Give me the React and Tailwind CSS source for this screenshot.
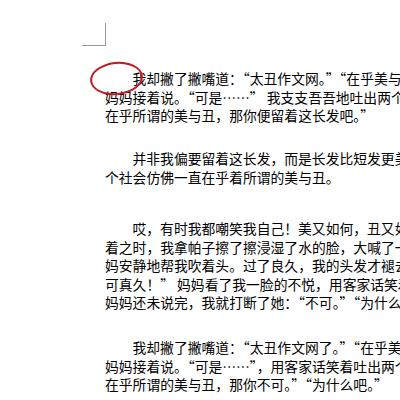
import React from 'react';

// Scanned document page: paragraphs run off the right edge of the crop
const paragraphs = [
  {
    gap: 'mt-0',
    lines: [
      '我却撇了撇嘴道：“太丑作文网。”“在乎美与丑有什么用',
      '妈妈接着说。“可是……” 我支支吾吾地吐出两个字',
      '在乎所谓的美与丑，那你便留着这长发吧。”',
    ],
  },
  {
    gap: 'mt-[24.5px]',
    lines: ['并非我偏要留着这长发，而是长发比短发更美', '个社会仿佛一直在乎着所谓的美与丑。'],
  },
  {
    gap: 'mt-[33px]',
    lines: [
      '哎，有时我都嘲笑我自己！美又如何，丑又如何',
      '着之时，我拿帕子擦了擦浸湿了水的脸，大喊了一声',
      '妈安静地帮我吹着头。过了良久，我的头发才褪去',
      '可真久！” 妈妈看了我一脸的不悦，用客家话笑着说',
      '妈妈还未说完，我就打断了她：“不可。”“为什么',
    ],
  },
  {
    gap: 'mt-[26.5px]',
    lines: [
      '我却撇了撇嘴道：“太丑作文网了。”“在乎美与丑',
      '妈妈接着说。“可是……”，用客家话笑着吐出两个字',
      '在乎所谓的美与丑，那你不可。”“为什么吧。”',
    ],
  },
];

export default function App() {
  return (
    <div className="relative w-[400px] h-[400px] overflow-hidden bg-white text-black font-['Noto_Sans_CJK_SC',sans-serif]">
      {/* page corner mark */}
      <div className="ml-[82px] mt-[23px] w-[24px] h-[23px] border-r border-b border-[#9a9a9a]" />

      <div className="mt-[23px] pl-[105px] text-[13.8px] leading-[18.5px]">
        {paragraphs.map((p, i) => (
          <div key={i} className={p.gap}>
            {p.lines.map((line, j) => (
              <div key={j} className={`whitespace-nowrap ${j === 0 ? 'pl-[27.5px]' : ''}`}>
                {line}
              </div>
            ))}
          </div>
        ))}
      </div>

      {/* red hand-drawn circle */}
      <div className="absolute left-[90px] top-[62px] w-[53px] h-[33px] rounded-[50%] border-2 border-[#c01a24] -rotate-6" />
    </div>
  );
}
